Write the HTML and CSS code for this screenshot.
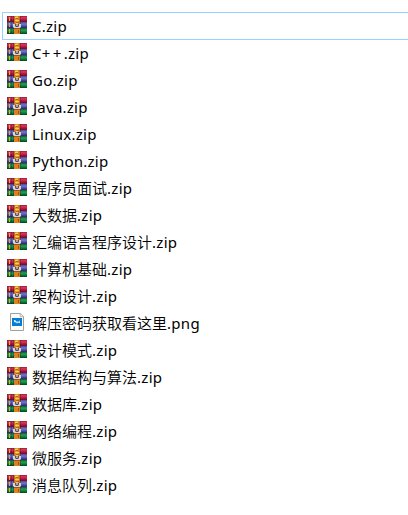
FILE: index.html
```html
<!DOCTYPE html>
<html lang="zh-CN">
<head>
<meta charset="utf-8">
<title>Files</title>
<link rel="stylesheet" href="styles.css">
</head>
<body>
<svg class="defs" aria-hidden="true">
  <defs>
    <linearGradient id="red" x2="0" y2="1"><stop stop-color="#94203c"/><stop offset=".3" stop-color="#dc3858"/><stop offset=".65" stop-color="#b5123c"/><stop offset="1" stop-color="#60102c"/></linearGradient>
    <linearGradient id="blue" x2="0" y2="1"><stop stop-color="#4a4a91"/><stop offset=".35" stop-color="#7775c9"/><stop offset=".7" stop-color="#4848a5"/><stop offset="1" stop-color="#25245f"/></linearGradient>
    <linearGradient id="green" x2="0" y2="1"><stop stop-color="#12572d"/><stop offset=".35" stop-color="#26a052"/><stop offset=".7" stop-color="#087936"/><stop offset="1" stop-color="#063e20"/></linearGradient>
    <linearGradient id="strap"><stop stop-color="#b8651b"/><stop offset=".45" stop-color="#f5aa35"/><stop offset="1" stop-color="#b8611b"/></linearGradient>
  </defs>
  <symbol id="zip" viewBox="0 0 20 18">
    <path fill="url(#red)" d="M0 0h20v6H0z"/>
    <path fill="url(#blue)" d="M0 6h20v6H0z"/>
    <path fill="url(#green)" d="M0 12h20v6H0z"/>
    <path fill="#2b1530" opacity=".3" d="M0 0h1v18H0zM4 0h1v18H4zM6 0h1v18H6zM13 0h1v18h-1z"/>
    <path fill="#e5a735" d="M2 1h1v4H2zM2 7h1v4H2zM2 13h1v4H2z"/>
    <path fill="url(#strap)" d="M7 0h6v8H7z"/>
    <path fill="#d98222" d="M7 11h6v7H7z"/>
    <path fill="#ffd04b" d="M8 1h3v1H8zM8 4h4v1H8z"/>
    <path fill="#a96320" d="M9 2h2v1H9zM9 6h3v1H9z"/>
    <path fill="#d8d6d2" d="M6 8h2v2l1 1h2l1-1V8h2v3l-1 1H7l-1-1z"/>
    <path fill="#704f38" d="M8 8h4v2H8z"/>
    <path fill="#f6f1df" d="M9.5 7h1v3h-1z"/>
    <path fill="#a5501a" d="M7 12h6v1H7zM11 14h1v3h-1z"/>
  </symbol>
  <symbol id="png" viewBox="0 0 20 18">
    <path fill="#fcfcfc" stroke="#a0a0a0" d="M3.5.5h10l3 3v14h-13z"/>
    <path fill="#eee" stroke="#a8a8a8" stroke-width=".8" d="M13.2.5v3.3h3.3"/>
    <path fill="#087bd4" d="M5 5h10v8H5z"/>
    <path fill="#d9edfa" d="M7 7h1l1 1 1 1 1-1 1 1 1-2v3h-1l-1-.6-1 1-1-1L7 9z"/>
  </symbol>
</svg>
<ul class="files">
  <li class="file selected"><svg class="icon"><use href="#zip"/></svg><span class="latin">C.zip</span></li>
  <li class="file"><svg class="icon"><use href="#zip"/></svg><span class="latin">C<b>++</b>.zip</span></li>
  <li class="file"><svg class="icon"><use href="#zip"/></svg><span class="latin">Go.zip</span></li>
  <li class="file"><svg class="icon"><use href="#zip"/></svg><span class="latin java">Java.zip</span></li>
  <li class="file"><svg class="icon"><use href="#zip"/></svg><span class="latin">Linux.zip</span></li>
  <li class="file"><svg class="icon"><use href="#zip"/></svg><span class="latin">Python.zip</span></li>
  <li class="file"><svg class="icon"><use href="#zip"/></svg><span>程序员面试<i>.zip</i></span></li>
  <li class="file"><svg class="icon"><use href="#zip"/></svg><span>大数据<i>.zip</i></span></li>
  <li class="file"><svg class="icon"><use href="#zip"/></svg><span>汇编语言程序设计<i>.zip</i></span></li>
  <li class="file"><svg class="icon"><use href="#zip"/></svg><span>计算机基础<i>.zip</i></span></li>
  <li class="file"><svg class="icon"><use href="#zip"/></svg><span>架构设计<i>.zip</i></span></li>
  <li class="file"><svg class="icon"><use href="#png"/></svg><span>解压密码获取看这里<i>.png</i></span></li>
  <li class="file"><svg class="icon"><use href="#zip"/></svg><span>设计模式<i>.zip</i></span></li>
  <li class="file"><svg class="icon"><use href="#zip"/></svg><span>数据结构与算法<i>.zip</i></span></li>
  <li class="file"><svg class="icon"><use href="#zip"/></svg><span>数据库<i>.zip</i></span></li>
  <li class="file"><svg class="icon"><use href="#zip"/></svg><span>网络编程<i>.zip</i></span></li>
  <li class="file"><svg class="icon"><use href="#zip"/></svg><span>微服务<i>.zip</i></span></li>
  <li class="file"><svg class="icon"><use href="#zip"/></svg><span>消息队列<i>.zip</i></span></li>
</ul>
</body>
</html>
```
FILE: styles.css
```css
body {
  margin: 0;
  background: #fff;
  color: #000;
  font: 350 15px/27px "Noto Sans", "Noto Sans CJK SC", sans-serif;
  overflow: hidden;
}
.defs {
  display: block;
  width: 0;
  height: 0;
}
.files {
  margin: 0;
  padding: 12px 0 0 2px;
  list-style: none;
}
.file {
  display: flex;
  box-sizing: border-box;
  height: 27px;
  padding: 4px 0 0 5px;
  gap: 5px;
  white-space: nowrap;
}
.file span {
  height: 27px;
  margin-top: -3px;
}
.file i {
  font-style: normal;
  font-weight: 400;
  letter-spacing: .3px;
}
.file .latin {
  font-weight: 400;
  letter-spacing: .25px;
}
.file b {
  font-weight: 400;
  letter-spacing: 2.4px;
}
.file .java {
  padding-left: 1px;
}
.selected {
  height: 28px;
  margin-bottom: -1px;
  padding: 3px 0 0 4px;
  border: 1px solid #99d1ff;
  border-width: 1px 0 1px 1px;
}
.icon {
  flex: none;
  width: 20px;
  height: 18px;
}
```
